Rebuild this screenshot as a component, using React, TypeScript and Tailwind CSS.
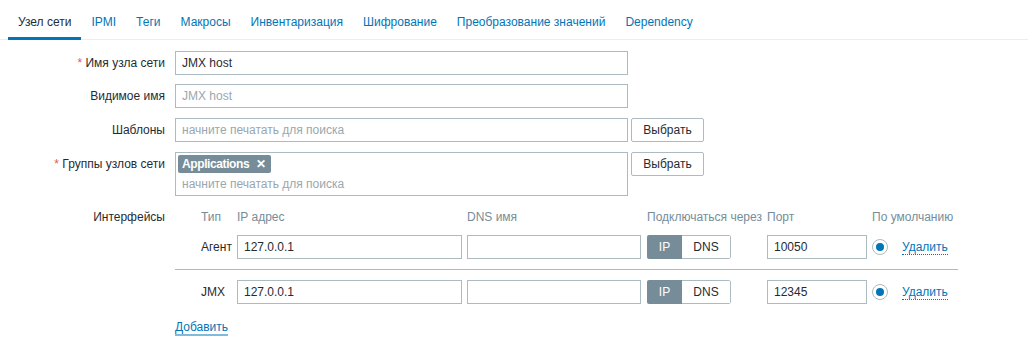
import { useState } from 'react'

const tabs = [
  'Узел сети',
  'IPMI',
  'Теги',
  'Макросы',
  'Инвентаризация',
  'Шифрование',
  'Преобразование значений',
  'Dependency',
]

const inputCls =
  'h-[24px] border border-[#acbbc2] bg-white px-[6px] text-[12px] text-[#1f2c33] outline-none placeholder:text-[#9aa7ae]'

function FormRow({
  label,
  required,
  children,
  className = '',
}: {
  label: string
  required?: boolean
  children: React.ReactNode
  className?: string
}) {
  return (
    <div className={'flex items-start ' + className}>
      <div className="w-[165px] shrink-0 text-right leading-[24px]">
        {required && <span className="text-[#e45959]">* </span>}
        {label}
      </div>
      <div className="ml-[10px] flex items-start">{children}</div>
    </div>
  )
}

function SelectButton() {
  return (
    <button
      type="button"
      className="ml-[3px] h-[24px] w-[73px] rounded-[2px] border border-[#acbbc2] bg-white text-[12px] text-[#1f2c33]"
    >
      Выбрать
    </button>
  )
}

function InterfaceRow({ type, port, last }: { type: string; port: string; last?: boolean }) {
  return (
    <div
      className={
        'flex items-center pl-[26px] ' + (last ? 'pt-[10px]' : 'pb-[10px] border-b border-[#acbbc2]')
      }
    >
      <div className="w-[36px]">{type}</div>
      <div className="w-[230px]">
        <input className={inputCls + ' w-[225px]'} defaultValue="127.0.0.1" />
      </div>
      <div className="w-[180px]">
        <input className={inputCls + ' w-[174px]'} defaultValue="" />
      </div>
      <div className="w-[120px]">
        <div className="flex h-[24px] w-[84px] overflow-hidden rounded-[2px]">
          <div className="flex w-[35px] items-center justify-center bg-[#768d99] text-white">IP</div>
          <div className="flex flex-1 items-center justify-center rounded-r-[2px] border border-l-0 border-[#acbbc2] bg-white">
            DNS
          </div>
        </div>
      </div>
      <div className="w-[105px]">
        <input className={inputCls + ' w-[100px]'} defaultValue={port} />
      </div>
      <div className="flex items-center">
        <span className="flex h-[16px] w-[16px] items-center justify-center rounded-full border border-[#acbbc2] bg-white">
          <span className="h-[8px] w-[8px] rounded-full bg-[#0275b8]" />
        </span>
        <a className="ml-[14px] border-b border-dotted border-[#0275b8] leading-[14px] text-[#0275b8]">
          Удалить
        </a>
      </div>
    </div>
  )
}

export default function App() {
  const [active] = useState(0)

  return (
    <div className="h-[340px] w-[1028px] overflow-hidden bg-white font-['Liberation_Sans',Arial,sans-serif] text-[12px] text-[#1f2c33]">
      <nav className="flex border-b border-[#ebeef0] pl-[8px]">
        {tabs.map((t, i) => (
          <div
            key={t}
            className={
              '-mb-px h-[40px] px-[10px] pt-[15px] leading-[14px] ' +
              (i === active
                ? 'border-b-[3px] border-[#0275b8] text-[#1f2c33]'
                : 'text-[#0275b8]')
            }
          >
            {t}
          </div>
        ))}
      </nav>

      <div className="pt-[11px]">
        <FormRow label="Имя узла сети" required>
          <input className={inputCls + ' w-[453px]'} defaultValue="JMX host" />
        </FormRow>
        <FormRow label="Видимое имя" className="mt-[9px]">
          <input className={inputCls + ' w-[453px]'} placeholder="JMX host" />
        </FormRow>
        <FormRow label="Шаблоны" className="mt-[10px]">
          <input className={inputCls + ' w-[453px]'} placeholder="начните печатать для поиска" />
          <SelectButton />
        </FormRow>
        <FormRow label="Группы узлов сети" required className="mt-[10px]">
          <div className="h-[44px] w-[453px] border border-[#acbbc2] bg-white p-[2px]">
            <span className="inline-flex h-[18px] items-center rounded-[2px] bg-[#768d99] pl-[4px] pr-[5px] font-bold tracking-[-0.4px] text-white">
              Applications
              <span className="ml-[7px] text-[12px]">✕</span>
            </span>
            <div className="mt-[4px] pl-[4px] leading-[14px] text-[#9aa7ae]">
              начните печатать для поиска
            </div>
          </div>
          <SelectButton />
        </FormRow>

        <div className="mt-[10px] flex items-start">
          <div className="w-[165px] shrink-0 text-right leading-[22px]">Интерфейсы</div>
          <div className="ml-[10px] w-[783px]">
            <div className="flex pl-[26px] leading-[22px] text-[#768d99]">
              <div className="w-[36px]">Тип</div>
              <div className="w-[230px]">IP адрес</div>
              <div className="w-[180px]">DNS имя</div>
              <div className="w-[120px]">Подключаться через</div>
              <div className="w-[105px]">Порт</div>
              <div>По умолчанию</div>
            </div>
            <div className="mt-[7px]">
              <InterfaceRow type="Агент" port="10050" />
              <InterfaceRow type="JMX" port="12345" last />
            </div>
            <div className="mt-[14px]">
              <a className="border-b-2 border-[#80badc] leading-[14px] text-[#0275b8]">Добавить</a>
            </div>
          </div>
        </div>
      </div>
    </div>
  )
}
